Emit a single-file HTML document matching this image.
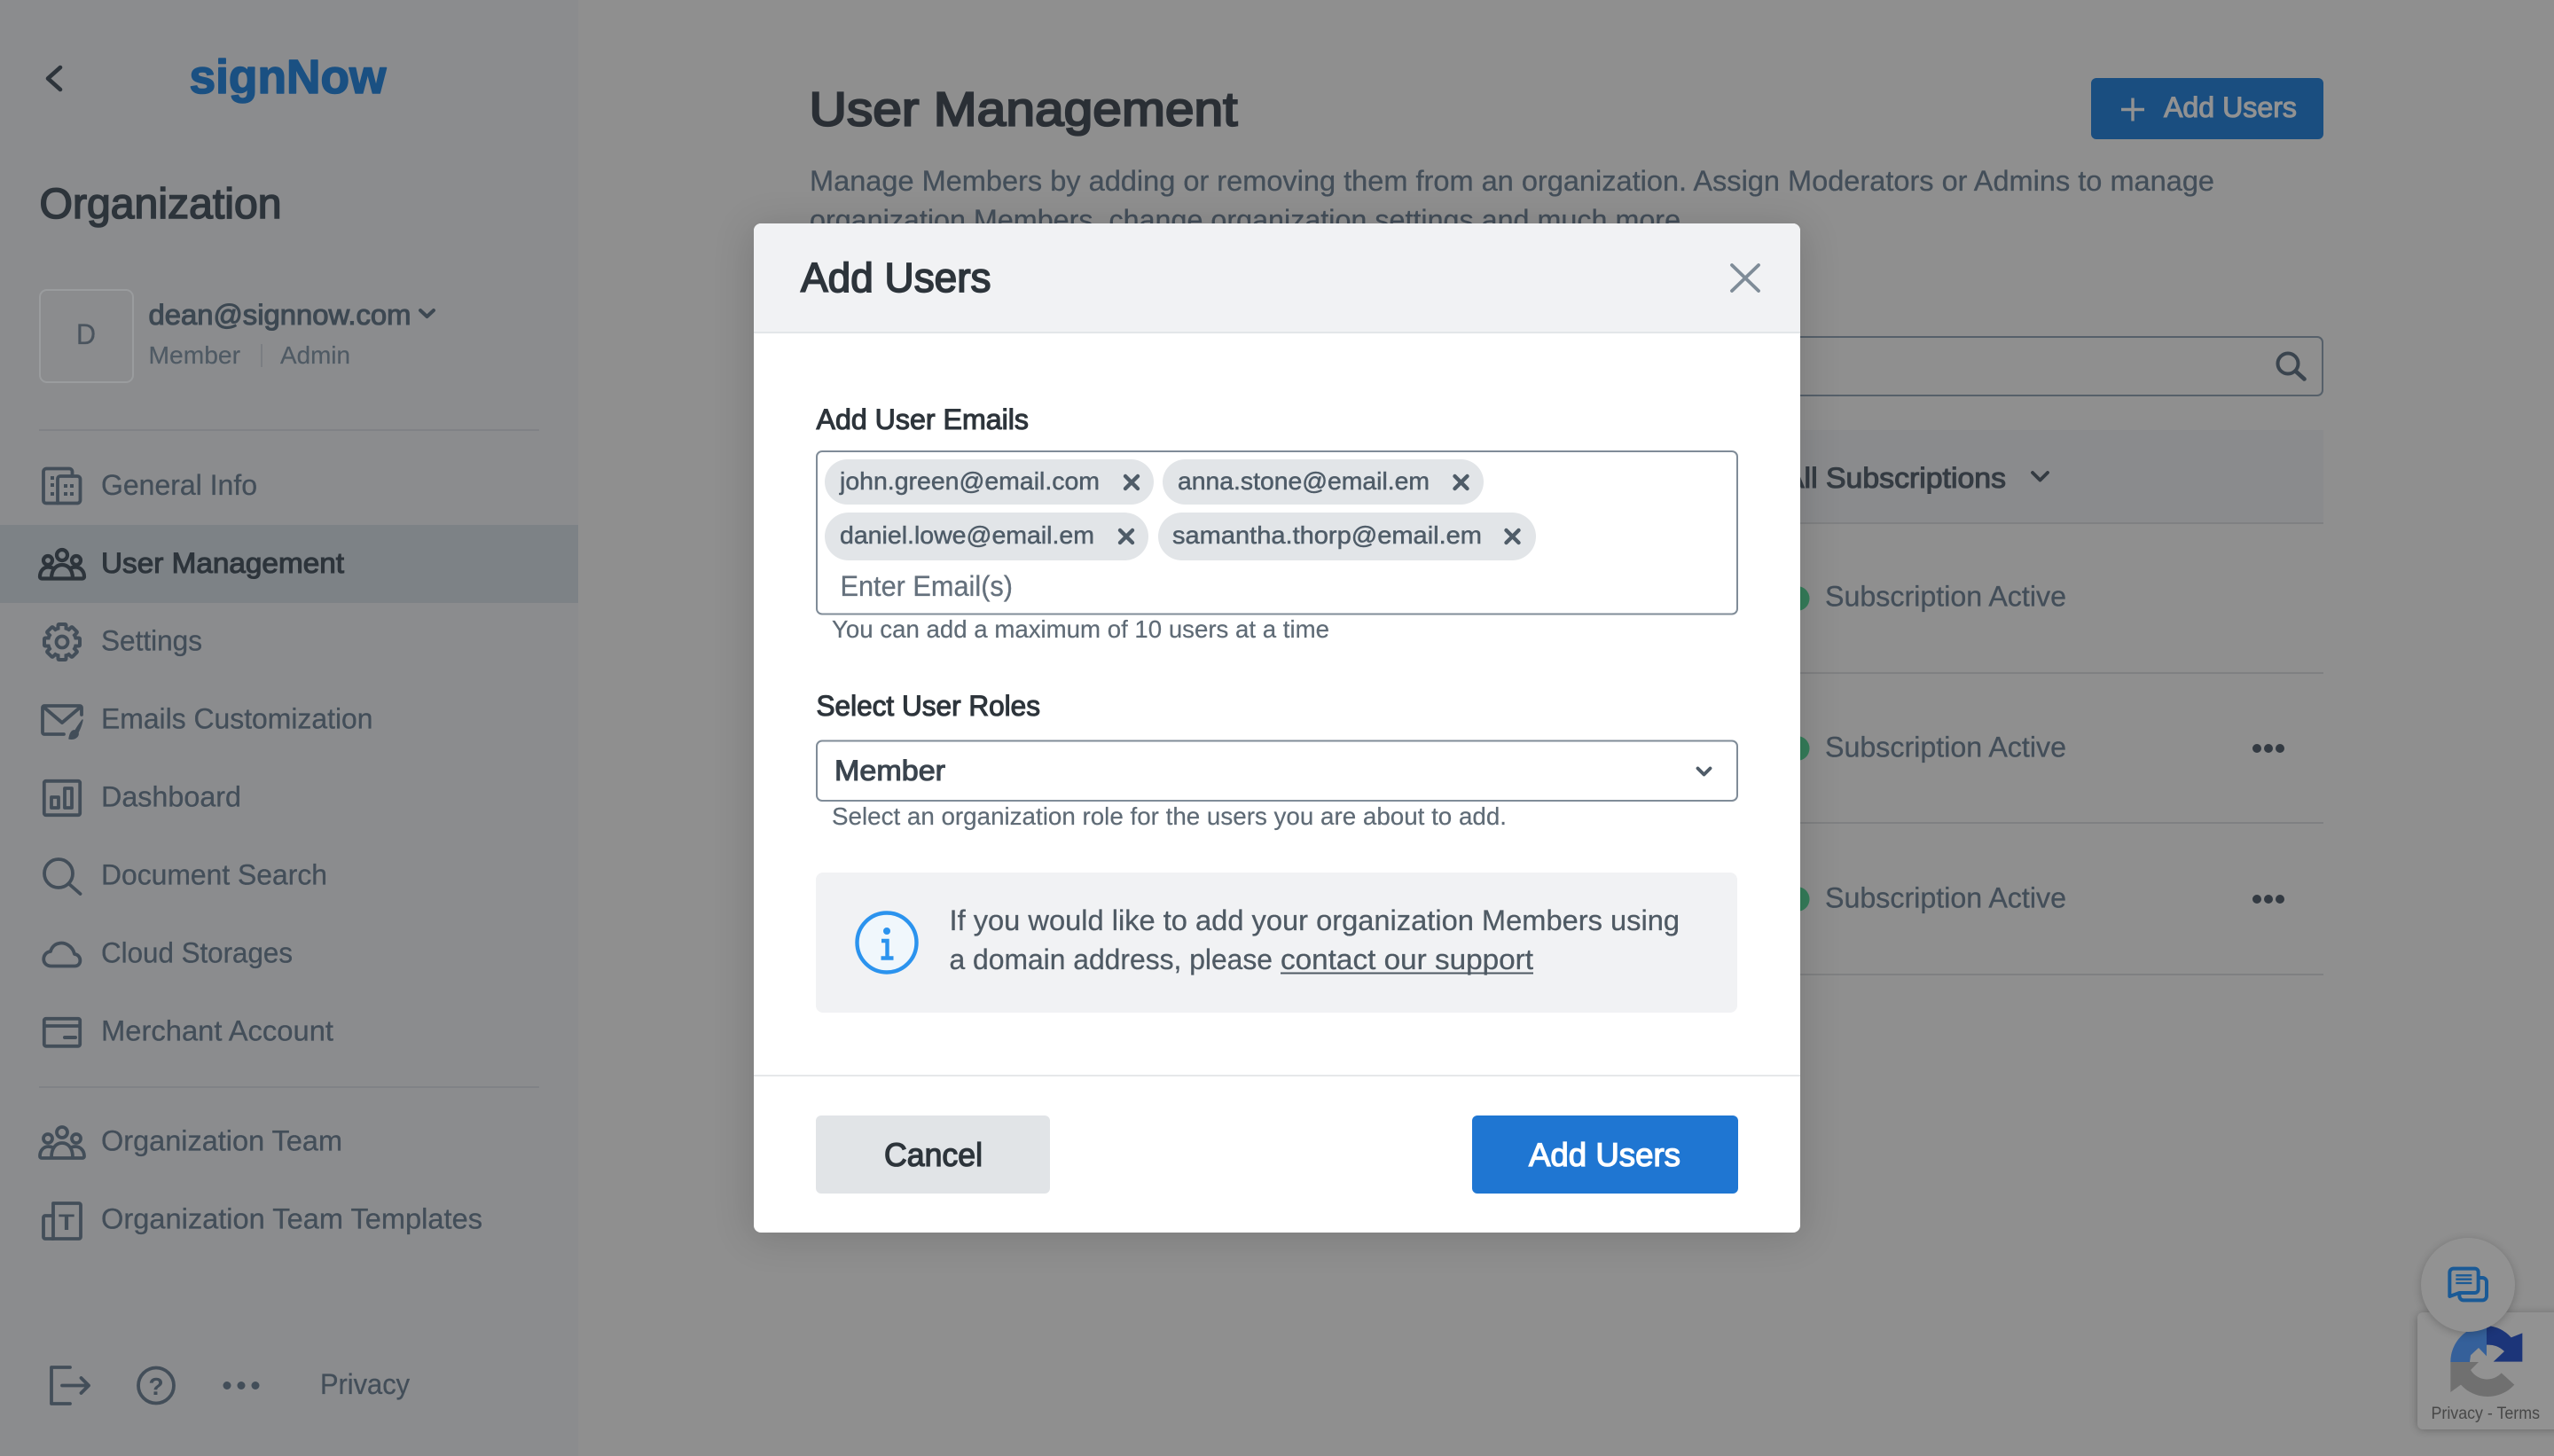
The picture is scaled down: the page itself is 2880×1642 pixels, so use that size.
<!DOCTYPE html>
<html lang="en">
<head>
<meta charset="utf-8">
<title>User Management - signNow</title>
<style>
html,body{margin:0;padding:0;width:2880px;height:1642px;overflow:hidden;background:#8f8f8f}
svg{display:block}
text{font-family:"Liberation Sans",Arial,sans-serif;white-space:pre}
.r{font-size:32px;fill:#434e59;stroke:#434e59;stroke-width:.3px}
.s{font-size:32px;fill:#2d343b;stroke:#2d343b;stroke-width:1.1px}
.m{font-size:28px;fill:#4f5c68;stroke:#4f5c68;stroke-width:.5px}
.h{font-size:28px;fill:#5f6b76;stroke:#5f6b76;stroke-width:.2px}
.i{fill:none;stroke:#434e59;stroke-width:3.8;stroke-linecap:round;stroke-linejoin:round}
.x{fill:none;stroke:#4f5c68;stroke-width:4.4;stroke-linecap:round}
</style>
</head>
<body>
<svg xmlns="http://www.w3.org/2000/svg" width="2880" height="1642" viewBox="0 0 2880 1642">
<defs>
<filter id="b" x="-20%" y="-20%" width="140%" height="140%"><feGaussianBlur stdDeviation="22"/></filter>
<filter id="b2" x="-30%" y="-30%" width="160%" height="160%"><feGaussianBlur stdDeviation="5"/></filter>
<filter id="b3" x="-10%" y="-10%" width="120%" height="120%"><feGaussianBlur stdDeviation="1"/></filter>
</defs>

<!-- page background -->
<rect width="2880" height="1642" fill="#8f8f8f"/>

<!-- sidebar -->
<rect width="652" height="1642" fill="#8b8c8e"/>
<rect y="592" width="652" height="88" fill="#7d8286"/>
<path d="M68 76 L54 88.5 L68 101" fill="none" stroke="#2d343b" stroke-width="4.6" stroke-linecap="round" stroke-linejoin="round"/>
<text x="213.500" y="105" textLength="222" lengthAdjust="spacingAndGlyphs" style="font-size:54px;font-weight:700;fill:#1a5082;stroke:#1a5082;stroke-width:1.600px;stroke-linejoin:round">signNow</text>
<text class="s" x="44.500" y="246" textLength="273" lengthAdjust="spacingAndGlyphs" style="font-size:48px;stroke-width:1.600px">Organization</text>
<rect x="45" y="327" width="105" height="104" rx="8" fill="none" stroke="#9a9c9e" stroke-width="2"/>
<text class="r" x="86" y="388" textLength="22" lengthAdjust="spacingAndGlyphs" style="fill:#4a545e;stroke:#4a545e">D</text>
<text class="s" x="167.500" y="366" textLength="296" lengthAdjust="spacingAndGlyphs" style="fill:#3d4852;stroke:#3d4852">dean@signnow.com</text>
<path d="M474 350 L481.500 357 L489 350" fill="none" stroke="#3d4852" stroke-width="4" stroke-linecap="round" stroke-linejoin="round"/>
<text class="h" x="167.500" y="410" textLength="103.500" lengthAdjust="spacingAndGlyphs" style="fill:#4f5a64;stroke:#4f5a64">Member</text>
<rect x="294" y="388" width="2" height="26" fill="#7b7e82"/>
<text class="h" x="316" y="410" textLength="79" lengthAdjust="spacingAndGlyphs" style="fill:#4f5a64;stroke:#4f5a64">Admin</text>
<rect x="44" y="484" width="564" height="2" fill="#808286"/>

<text class="r" x="114" y="558" textLength="176" lengthAdjust="spacingAndGlyphs">General Info</text>
<text class="s" x="114" y="646" textLength="274" lengthAdjust="spacingAndGlyphs">User Management</text>
<text class="r" x="114" y="733.500" textLength="114" lengthAdjust="spacingAndGlyphs">Settings</text>
<text class="r" x="114" y="821.500" textLength="306.500" lengthAdjust="spacingAndGlyphs">Emails Customization</text>
<text class="r" x="114" y="909.500" textLength="158" lengthAdjust="spacingAndGlyphs">Dashboard</text>
<text class="r" x="114" y="997.500" textLength="255" lengthAdjust="spacingAndGlyphs">Document Search</text>
<text class="r" x="114" y="1085.500" textLength="216" lengthAdjust="spacingAndGlyphs">Cloud Storages</text>
<text class="r" x="114" y="1173.500" textLength="262" lengthAdjust="spacingAndGlyphs">Merchant Account</text>
<rect x="44" y="1225" width="564" height="2" fill="#808286"/>
<text class="r" x="114" y="1297.500" textLength="272" lengthAdjust="spacingAndGlyphs">Organization Team</text>
<text class="r" x="114" y="1385.500" textLength="430" lengthAdjust="spacingAndGlyphs">Organization Team Templates</text>
<text class="r" x="361" y="1572" textLength="101" lengthAdjust="spacingAndGlyphs">Privacy</text>

<!-- building -->
<path class="i" d="M65 567.500 H52 a3 3 0 0 1-3-3 V532 a3.500 3.500 0 0 1 3.500-3.500 H78 a3.500 3.500 0 0 1 3.500 3.500 V537"/>
<path class="i" d="M68 537 H87 a3.500 3.500 0 0 1 3.500 3.500 V564 a3.500 3.500 0 0 1-3.500 3.500 H65 V540 a3 3 0 0 1 3-3 Z"/>
<g fill="#434e59"><rect x="57" y="537" width="4" height="4"/><rect x="57" y="545" width="4" height="4"/><rect x="57" y="555" width="4" height="4"/><rect x="72" y="546" width="4" height="4"/><rect x="79" y="546" width="4" height="4"/><rect x="72" y="555" width="4" height="4"/><rect x="79" y="555" width="4" height="4"/></g>
<!-- team active -->
<g class="i" style="stroke:#2d343b;stroke-width:4.200">
<circle cx="70" cy="626" r="6"/><circle cx="54" cy="632" r="5"/><circle cx="86" cy="632" r="5"/>
<path d="M47 652.500 H93 a2 2 0 0 0 2-2 c0-7-5-11-10-11 c-2 0-4 .5-5.500 1.500 M60.500 641 c-2-1-4-1.500-6-1.500 c-5 0-9.500 4-9.500 11 a2 2 0 0 0 2 2 M58 652 c0-9 5-15 12-15 s12 6 12 15"/>
</g>
<!-- gear -->
<g fill="#434e59">
<circle cx="70" cy="724" r="18"/>
<g><rect x="63.500" y="702" width="13" height="44" rx="3"/><rect x="63.500" y="702" width="13" height="44" rx="3" transform="rotate(45 70 724)"/><rect x="63.500" y="702" width="13" height="44" rx="3" transform="rotate(90 70 724)"/><rect x="63.500" y="702" width="13" height="44" rx="3" transform="rotate(135 70 724)"/></g>
</g>
<g fill="#8b8c8e">
<circle cx="70" cy="724" r="14"/>
<rect x="67.500" y="706" width="5" height="36"/><rect x="67.500" y="706" width="5" height="36" transform="rotate(45 70 724)"/><rect x="67.500" y="706" width="5" height="36" transform="rotate(90 70 724)"/><rect x="67.500" y="706" width="5" height="36" transform="rotate(135 70 724)"/>
</g>
<circle class="i" cx="70" cy="724" r="6.500"/>
<!-- envelope -->
<path class="i" d="M72 828 H50 a2 2 0 0 1-2-2 V798 a2 2 0 0 1 2-2 H90 a2 2 0 0 1 2 2 V806"/>
<path class="i" d="M50 798 L70 815 L90 798"/>
<path d="M93 812 C90 816 87 820 85 824 C81 823 79 827 78 833 C84 834 89 831 88 826 C90 822 92 817 93 812 Z" fill="#434e59" stroke="#434e59" stroke-width="1.500" stroke-linejoin="round"/>
<!-- dashboard -->
<rect class="i" x="49.800" y="880.800" width="40.400" height="38.400" rx="2"/>
<rect class="i" x="58" y="899" width="8" height="12"/>
<rect class="i" x="73" y="889" width="8" height="22"/>
<!-- search -->
<circle class="i" cx="66" cy="985" r="16"/><path class="i" d="M78 997 L90.500 1008"/>
<!-- cloud -->
<path class="i" d="M58 1089.500 H84 c9 0 8-13 0-13.500 c-2-9-11-14-18-12 c-5 1-8 5-9 9 c-10 1-11 16.500 1 16.500 Z"/>
<!-- card -->
<rect class="i" x="49.800" y="1148.800" width="40.400" height="31" rx="2"/>
<path class="i" d="M50 1157 H90"/><path class="i" d="M73 1170 H85" style="stroke-width:4"/>
<!-- team -->
<g class="i">
<circle cx="70" cy="1277" r="6"/><circle cx="54" cy="1284" r="5"/><circle cx="86" cy="1284" r="5"/>
<path d="M47 1306 H93 a2 2 0 0 0 2-2 c0-7-5-11-10-11 c-2 0-4 .5-5.500 1.500 M60.500 1294.500 c-2-1-4-1.500-6-1.500 c-5 0-9.500 4-9.500 11 a2 2 0 0 0 2 2 M58 1305 c0-10 5-16 12-16 s12 6 12 16"/>
</g>
<!-- template -->
<path class="i" d="M59 1397 H89 a2 2 0 0 0 2-2 V1359 a2 2 0 0 0-2-2 H60 V1395"/>
<path class="i" d="M60 1371 H51 a2 2 0 0 0-2 2 V1395 a2 2 0 0 0 2 2 H60"/>
<text x="66" y="1387" textLength="18" lengthAdjust="spacingAndGlyphs" style="font-size:25px;font-weight:700;fill:#434e59">T</text>
<!-- logout / help / dots -->
<path class="i" d="M79 1542 H58 V1583 H79"/><path class="i" d="M70 1562.500 H100 M91.500 1554 L100 1562.500 L91.500 1571"/>
<circle class="i" cx="176" cy="1562.500" r="20"/>
<text x="176" y="1573" text-anchor="middle" style="font-size:28px;font-weight:700;fill:#434e59">?</text>
<g fill="#434e59"><circle cx="256" cy="1562.500" r="4.500"/><circle cx="272" cy="1562.500" r="4.500"/><circle cx="288" cy="1562.500" r="4.500"/></g>

<!-- main content -->
<text class="s" x="912.500" y="141.500" textLength="483" lengthAdjust="spacingAndGlyphs" style="font-size:54px;stroke-width:2.200px;fill:#2a2f35;stroke:#2a2f35">User Management</text>
<text class="r" x="913" y="215" textLength="1584" lengthAdjust="spacingAndGlyphs">Manage Members by adding or removing them from an organization. Assign Moderators or Admins to manage</text>
<text class="r" x="913" y="259" textLength="991" lengthAdjust="spacingAndGlyphs">organization Members, change organization settings and much more.</text>
<rect x="2358" y="88" width="262" height="69" rx="6" fill="#1a4e80"/>
<path d="M2392 123.500 H2418 M2405 110.500 V136.500" stroke="#929292" stroke-width="3.400" fill="none"/>
<text class="s" x="2440" y="132" textLength="150" lengthAdjust="spacingAndGlyphs" style="fill:#929292;stroke:#929292">Add Users</text>

<rect x="915" y="380" width="1704" height="66" rx="6" fill="none" stroke="#56606a" stroke-width="2"/>
<circle cx="2580" cy="410" r="11.500" fill="none" stroke="#3a444e" stroke-width="4"/>
<path d="M2588.500 418.500 L2598.500 427.500" stroke="#3a444e" stroke-width="4.600" stroke-linecap="round"/>

<rect x="914" y="485" width="1706" height="105" fill="#8a8b8d"/>
<text class="s" x="2012" y="550" textLength="250" lengthAdjust="spacingAndGlyphs" style="fill:#343b42;stroke:#343b42">All Subscriptions</text>
<path d="M2292 533 L2300.500 541.500 L2309 533" fill="none" stroke="#343b42" stroke-width="3.800" stroke-linecap="round" stroke-linejoin="round"/>
<rect x="914" y="589" width="1706" height="2" fill="#7f8082"/>
<rect x="914" y="758" width="1706" height="2" fill="#7f8082"/>
<rect x="914" y="927" width="1706" height="2" fill="#7f8082"/>
<rect x="914" y="1098" width="1706" height="2" fill="#7f8082"/>

<g fill="#357d5a"><circle cx="2026.500" cy="675" r="14"/><circle cx="2026.500" cy="844" r="14"/><circle cx="2026.500" cy="1014" r="14"/></g>
<text class="r" x="2058" y="683.500" textLength="272" lengthAdjust="spacingAndGlyphs">Subscription Active</text>
<text class="r" x="2058" y="853.500" textLength="272" lengthAdjust="spacingAndGlyphs">Subscription Active</text>
<text class="r" x="2058" y="1023.500" textLength="272" lengthAdjust="spacingAndGlyphs">Subscription Active</text>
<g fill="#333a42"><circle cx="2545" cy="844" r="5"/><circle cx="2558" cy="844" r="5"/><circle cx="2571" cy="844" r="5"/><circle cx="2545" cy="1014" r="5"/><circle cx="2558" cy="1014" r="5"/><circle cx="2571" cy="1014" r="5"/></g>

<!-- recaptcha -->
<rect x="2726" y="1482" width="170" height="130" rx="6" fill="#000" opacity=".3" filter="url(#b2)"/>
<rect x="2726" y="1480" width="170" height="132" rx="6" fill="#929292"/>
<g transform="translate(2680 1380) scale(.33333)" filter="url(#b3)">
<path d="M250 468 A122 122 0 0 1 372 345 L372 448 L345 420 L318 445 L315 468 Z" fill="#35619a"/>
<path d="M372 345 A122 122 0 0 1 455 385 L493 370 L493 467 L395 467 L432 432 A75 75 0 0 0 372 410 Z" fill="#1c3579"/>
<path d="M250 468 L345 468 L318 495 A65 65 0 0 0 422 505 L466 545 A122 122 0 0 1 285 545 L250 570 Z" fill="#707070"/>
</g>
<text x="2741.500" y="1600" textLength="122.500" lengthAdjust="spacingAndGlyphs" style="font-size:19px;fill:#484848">Privacy - Terms</text>
<!-- chat -->
<circle cx="2783" cy="1451" r="53" fill="#000" opacity=".22" filter="url(#b2)"/>
<circle cx="2783" cy="1449" r="53" fill="#929292"/>
<g transform="translate(2680 1380) scale(.33333)" fill="none" stroke="#1a5a96" stroke-width="12" stroke-linejoin="round">
<rect x="280" y="183" width="92" height="76" rx="14"/>
<path fill="#929292" d="M260 152 H332 a12 12 0 0 1 12 12 V222 a12 12 0 0 1-12 12 H280 L247 246 V165 a13 13 0 0 1 13-13 Z"/>
<path stroke-width="7" d="M268 175 H322 M268 188 H322 M268 201 H322"/>
</g>

<!-- modal -->
<rect x="846" y="256" width="1188" height="1140" rx="12" fill="#000" opacity=".14" filter="url(#b)"/>
<rect x="850" y="252" width="1180" height="1138" rx="8" fill="#fff"/>
<path d="M850 374 V260 a8 8 0 0 1 8-8 H2022 a8 8 0 0 1 8 8 V374 Z" fill="#f1f2f4"/>
<rect x="850" y="374" width="1180" height="2" fill="#e3e6e9"/>
<text class="s" x="903" y="329" textLength="214.500" lengthAdjust="spacingAndGlyphs" style="font-size:46px;stroke-width:1.700px">Add Users</text>
<path d="M1953 299 L1983 328 M1983 299 L1953 328" fill="none" stroke="#7f8c98" stroke-width="3.800" stroke-linecap="round"/>

<text class="s" x="920.500" y="484" textLength="239.500" lengthAdjust="spacingAndGlyphs">Add User Emails</text>
<rect x="921" y="509" width="1038" height="183.500" rx="6" fill="#fff" stroke="#808c98" stroke-width="2"/>
<rect x="930" y="518" width="371" height="51" rx="25.500" fill="#e2e5e8"/>
<rect x="1311" y="518" width="362" height="51" rx="25.500" fill="#e2e5e8"/>
<rect x="930" y="578" width="365" height="54" rx="27" fill="#e2e5e8"/>
<rect x="1306" y="578" width="426" height="54" rx="27" fill="#e2e5e8"/>
<text class="m" x="947" y="552" textLength="293" lengthAdjust="spacingAndGlyphs">john.green@email.com</text>
<text class="m" x="1328" y="552" textLength="284" lengthAdjust="spacingAndGlyphs">anna.stone@email.em</text>
<text class="m" x="947" y="613" textLength="287" lengthAdjust="spacingAndGlyphs">daniel.lowe@email.em</text>
<text class="m" x="1322" y="613" textLength="349" lengthAdjust="spacingAndGlyphs">samantha.thorp@email.em</text>
<path class="x" d="M1269 537 L1283 551 M1283 537 L1269 551"/>
<path class="x" d="M1640.500 537 L1654.500 551 M1654.500 537 L1640.500 551"/>
<path class="x" d="M1263 598 L1277 612 M1277 598 L1263 612"/>
<path class="x" d="M1698.500 598 L1712.500 612 M1712.500 598 L1698.500 612"/>
<text class="r" x="947.500" y="672" textLength="194.500" lengthAdjust="spacingAndGlyphs" style="fill:#65717d;stroke:#65717d">Enter Email(s)</text>
<text class="h" x="938" y="719" textLength="561" lengthAdjust="spacingAndGlyphs">You can add a maximum of 10 users at a time</text>

<text class="s" x="920.500" y="807" textLength="252.500" lengthAdjust="spacingAndGlyphs">Select User Roles</text>
<rect x="921" y="835.500" width="1038" height="67.500" rx="6" fill="#fff" stroke="#808c98" stroke-width="2"/>
<text class="s" x="941" y="880" textLength="125" lengthAdjust="spacingAndGlyphs" style="fill:#3a444e;stroke:#3a444e">Member</text>
<path d="M1914.500 866.500 L1921.500 873.500 L1928.500 866.500" fill="none" stroke="#4f5c68" stroke-width="3.800" stroke-linecap="round" stroke-linejoin="round"/>
<text class="h" x="938" y="930" textLength="761" lengthAdjust="spacingAndGlyphs">Select an organization role for the users you are about to add.</text>

<rect x="920" y="984" width="1039" height="158" rx="8" fill="#f1f2f4"/>
<circle cx="1000" cy="1063" r="33.500" fill="#f0f7fc" stroke="#2b93ee" stroke-width="4.400"/>
<circle cx="1000" cy="1050" r="4" fill="#2b93ee"/>
<path d="M994 1061 H1000.500 V1080 M993.500 1080.500 H1007.500" fill="none" stroke="#2b93ee" stroke-width="4.400"/>
<text class="r" x="1070.500" y="1049" textLength="823.500" lengthAdjust="spacingAndGlyphs" style="fill:#4f5a64;stroke:#4f5a64">If you would like to add your organization Members using</text>
<text class="r" x="1070.500" y="1093" textLength="364.500" lengthAdjust="spacingAndGlyphs" style="fill:#4f5a64;stroke:#4f5a64">a domain address, please</text>
<text class="r" x="1444" y="1093" textLength="285" lengthAdjust="spacingAndGlyphs" style="fill:#4f5a64;stroke:#4f5a64">contact our support</text>
<rect x="1444" y="1096.500" width="285" height="2" fill="#4f5a64"/>

<rect x="850" y="1212" width="1180" height="2" fill="#e6e8ea"/>
<rect x="920" y="1258" width="264" height="88" rx="6" fill="#e1e4e7"/>
<text class="s" x="997" y="1315" textLength="111" lengthAdjust="spacingAndGlyphs" style="font-size:37px;stroke-width:1.300px">Cancel</text>
<rect x="1660" y="1258" width="300" height="88" rx="6" fill="#1f76d2"/>
<text class="s" x="1724" y="1315" textLength="171" lengthAdjust="spacingAndGlyphs" style="font-size:37px;stroke-width:1.300px;fill:#fff;stroke:#fff">Add Users</text>
</svg>
</body>
</html>
